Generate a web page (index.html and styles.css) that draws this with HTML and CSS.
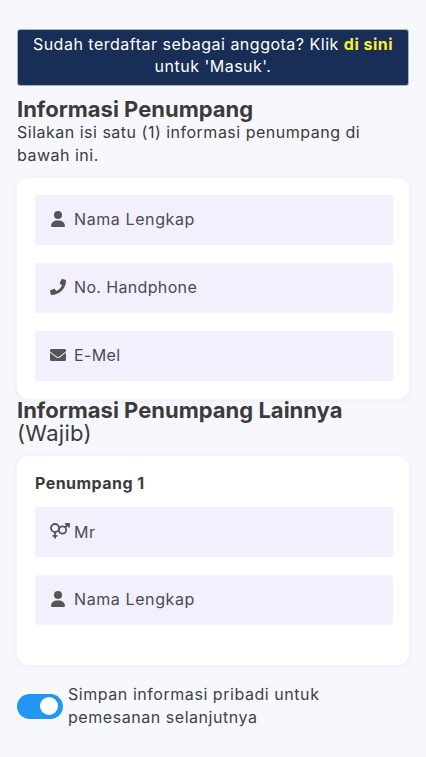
FILE: index.html
```html
<!DOCTYPE html>
<html lang="id">
<head>
    <meta charset="UTF-8">
    <title>Informasi Penumpang</title>
    <link rel="stylesheet" href="styles.css">
</head>
<body>
    <div class="login-note">Sudah terdaftar sebagai anggota? Klik <a href="#">di sini</a> untuk 'Masuk'.</div>

    <h2 class="title">Informasi Penumpang</h2>
    <p class="subtitle">Silakan isi satu (1) informasi penumpang di bawah ini.</p>

    <div class="card">
        <div class="field">
            <svg class="icon" viewBox="0 0 448 512"><path d="M224 256a128 128 0 1 0 0-256 128 128 0 1 0 0 256zm-45.700 48C79.800 304 0 383.800 0 482.300 0 498.700 13.300 512 29.700 512h388.600c16.400 0 29.700-13.300 29.700-29.700C448 383.800 368.200 304 269.700 304h-91.400z"/></svg>
            <span>Nama Lengkap</span>
        </div>
        <div class="field">
            <svg class="icon" viewBox="0 0 512 512"><path d="M493.400 24.600l-104-24c-11.300-2.600-22.900 3.300-27.500 13.900l-48 112c-4.200 9.800-1.400 21.300 6.900 28l60.600 49.600c-36 76.700-98.900 140.500-177.200 177.200l-49.600-60.600c-6.800-8.300-18.200-11.100-28-6.900l-112 48C3.900 366.500-2 378.100.6 389.400l24 104C27.100 504.200 36.700 512 48 512c256.100 0 464-207.500 464-464 0-11.200-7.700-20.900-18.600-23.400z"/></svg>
            <span class="tight">No. Handphone</span>
        </div>
        <div class="field">
            <svg class="icon" viewBox="0 0 512 512"><path d="M502.300 190.800c3.900-3.100 9.700-.2 9.700 4.700V400c0 26.500-21.500 48-48 48H48c-26.500 0-48-21.500-48-48V195.600c0-5 5.700-7.800 9.700-4.700 22.400 17.400 52.100 39.500 154.100 113.600 21.100 15.400 56.700 47.800 92.200 47.600 35.700.3 72-32.800 92.300-47.600 102-74.100 131.600-96.300 154-113.700zM256 320c23.200.4 56.600-29.200 73.400-41.400 132.700-96.300 142.800-104.700 173.400-128.700 5.800-4.500 9.200-11.500 9.200-18.900v-19c0-26.500-21.500-48-48-48H48C21.500 64 0 85.500 0 112v19c0 7.400 3.400 14.300 9.200 18.900 30.600 23.900 40.700 32.400 173.400 128.700 16.800 12.200 50.200 41.800 73.400 41.400z"/></svg>
            <span class="tight">E-Mel</span>
        </div>
    </div>

    <h2 class="title title-second">Informasi Penumpang Lainnya <span class="required">(Wajib)</span></h2>

    <div class="card card-second">
        <div class="card-label">Penumpang 1</div>
        <div class="field">
            <svg class="icon icon-gender" viewBox="0 0 20 16" fill="none" stroke="#555" stroke-width="1.800">
                <circle cx="5" cy="5" r="4"/>
                <path d="M5 9v6.500M2.500 12.800h5"/>
                <circle cx="12.500" cy="7" r="3.700"/>
                <path d="M15 4.500l3.800-3.500M15.200 1h3.800v3.500"/>
            </svg>
            <span class="gender-text">Mr</span>
        </div>
        <div class="field">
            <svg class="icon" viewBox="0 0 448 512"><path d="M224 256a128 128 0 1 0 0-256 128 128 0 1 0 0 256zm-45.700 48C79.800 304 0 383.800 0 482.300 0 498.700 13.300 512 29.700 512h388.600c16.400 0 29.700-13.300 29.700-29.700C448 383.800 368.200 304 269.700 304h-91.400z"/></svg>
            <span>Nama Lengkap</span>
        </div>
    </div>

    <div class="save-row">
        <div class="toggle"><div class="knob"></div></div>
        <div class="save-text">Simpan informasi pribadi untuk pemesanan selanjutnya</div>
    </div>
</body>
</html>
```

FILE: styles.css
```css
* {
    box-sizing: border-box;
}
body {
    margin: 0;
    padding: 29px 17px 0;
    height: 757px;
    overflow: hidden;
    background: #f7f8fe;
    color: #3b3b3b;
    font-family: "Inter", "Open Sans", sans-serif;
    font-size: 16px;
    letter-spacing: 0.5px;
}
.login-note {
    background: #182e56;
    color: #fff;
    border: 1px solid #aab3c6;
    border-radius: 3px;
    height: 57px;
    padding: 3px 10px 0;
    text-align: center;
    line-height: 22px;
}
.login-note a {
    color: #ffeb3b;
    font-weight: 700;
    text-decoration: none;
}
.title {
    margin: 0;
    font-size: 22px;
    line-height: 24px;
    font-weight: 700;
    letter-spacing: 0;
    color: #3b3b3b;
}
.login-note + .title {
    margin-top: 11px;
}
.subtitle {
    margin: 0;
    line-height: 23px;
    height: 46px;
    padding-right: 30px;
}
.card {
    margin-top: 11px;
    background: #fff;
    border-radius: 12px;
    box-shadow: 0 1px 6px rgba(40, 50, 90, 0.06);
    padding: 17px 16px 17px 18px;
    height: 221px;
}
.field {
    display: flex;
    align-items: center;
    height: 50px;
    margin-bottom: 18px;
    padding-left: 15px;
    padding-bottom: 2px;
    background: #f3f0fe;
    border-radius: 2px;
    color: #4a4a55;
    letter-spacing: 0.6px;
}
.tight {
    letter-spacing: 0.35px;
}
.icon {
    width: 16px;
    height: 16px;
    margin-right: 8px;
    fill: #555;
    flex: none;
}
.icon-gender {
    width: 20px;
    margin-right: 4px;
    fill: none;
}
.gender-text {
    margin-top: 2px;
}
.title-second {
    line-height: 23px;
}
.required {
    display: block;
    font-weight: 400;
    font-size: 22px;
    line-height: 23px;
    letter-spacing: 0.3px;
}
.card-second {
    margin-top: 11px;
    height: 209px;
    padding-top: 17px;
}
.card-label {
    font-size: 16px;
    font-weight: 700;
    line-height: 20px;
    margin-bottom: 14px;
    letter-spacing: 0.45px;
}
.save-row {
    display: flex;
    align-items: center;
    margin-top: 18px;
}
.toggle {
    width: 46px;
    height: 25px;
    border-radius: 13px;
    background: #2196f3;
    margin-right: 5px;
    flex: none;
    display: flex;
    align-items: center;
    justify-content: flex-end;
    padding-right: 5px;
}
.knob {
    width: 18px;
    height: 18px;
    border-radius: 50%;
    background: #fff;
}
.save-text {
    line-height: 23px;
    color: #3f3f4a;
    width: 270px;
    letter-spacing: 0.55px;
}
```
